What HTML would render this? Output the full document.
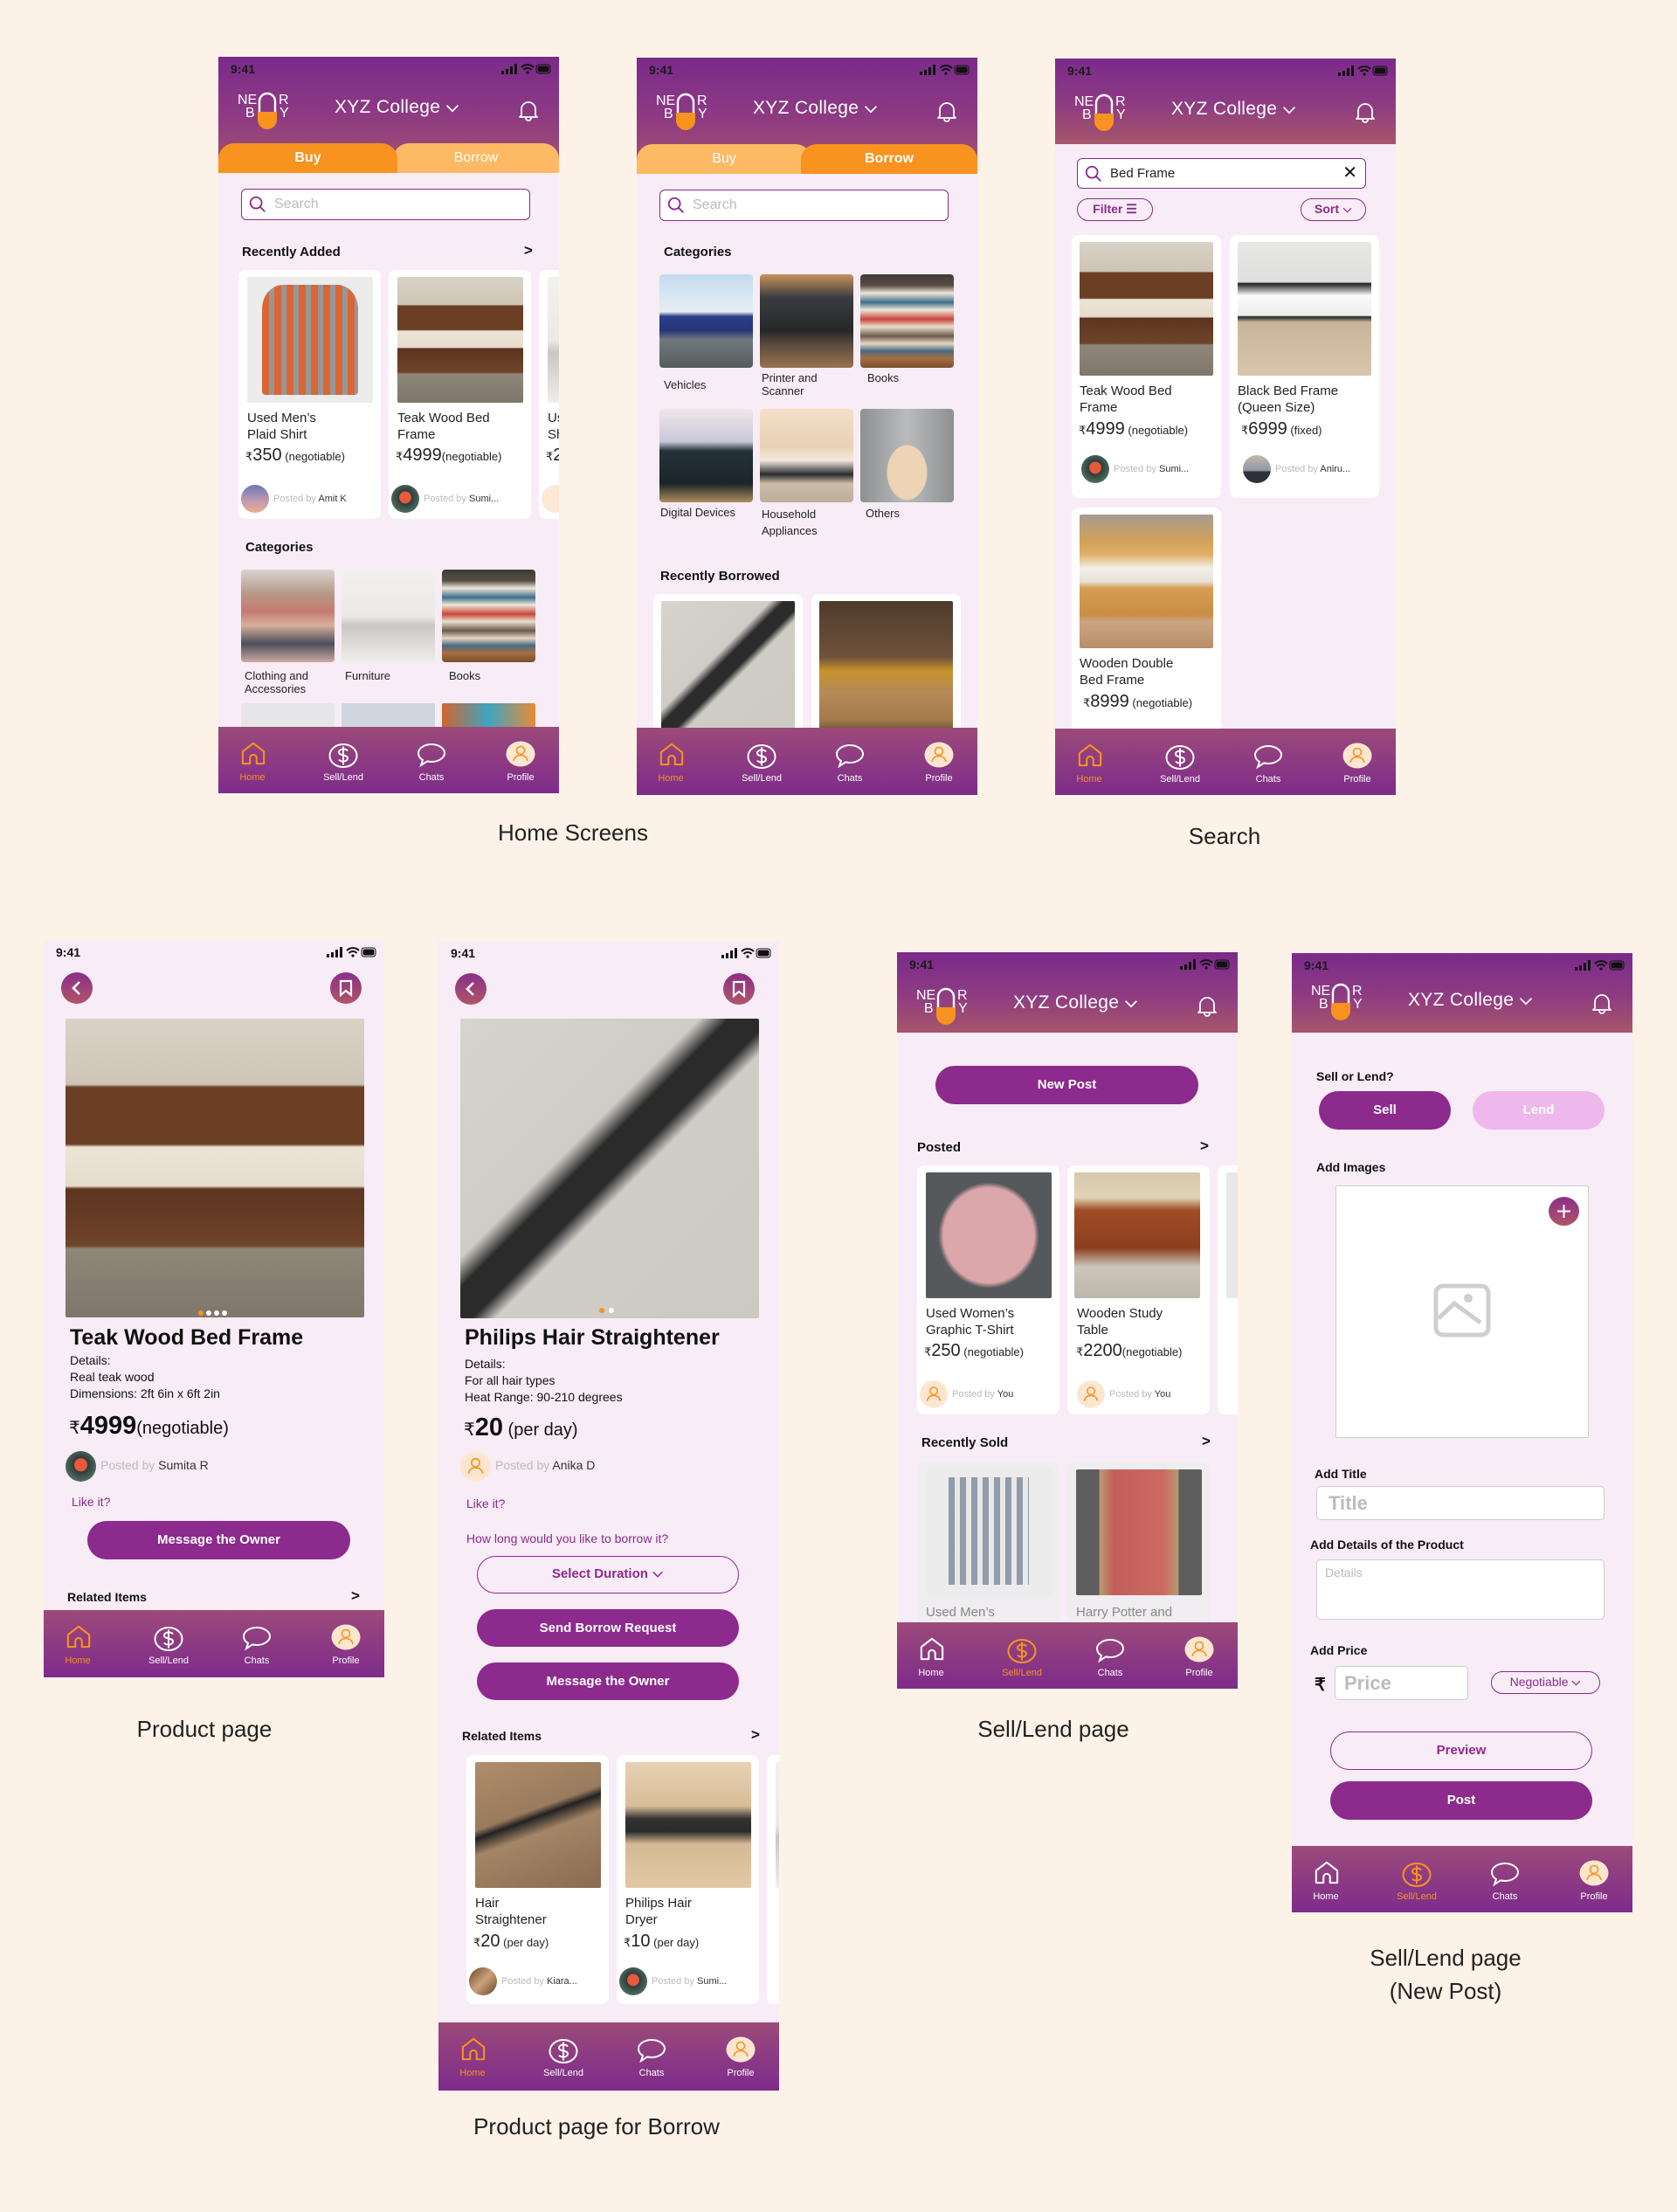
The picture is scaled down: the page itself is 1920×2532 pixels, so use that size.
<!DOCTYPE html>
<html><head><meta charset="utf-8">
<style>
*{margin:0;padding:0;box-sizing:border-box}
body{width:1920px;height:2532px;background:#fdf2e7;font-family:"Liberation Sans",sans-serif;position:relative;overflow:hidden;color:#111}
.ph{position:absolute;width:390px;background:#f8ecf6;overflow:hidden}
.ph>*,.card>*,.nav>*,.hd>*{position:absolute}
.hd{left:0;top:0;width:390px;background:linear-gradient(180deg,#7a2a8b 0%,#8f3c82 55%,#a6566a 100%)}
.st{left:14px;top:6px;font-size:14px;font-weight:bold;color:#111}
.hd .st{color:#1a1a1a}
.sbar{right:8px;top:7px}
.logo{left:22px;top:36px;width:62px;height:52px}
.college{left:133px;top:46px;color:#fff;font-size:21px;letter-spacing:.3px}
.bell{left:341px;top:47px}
.tab{top:99px;height:34px;border-radius:18px 18px 0 0;color:#fff;font-size:16px;text-align:center;line-height:34px}
.search{left:26px;top:151px;width:331px;height:36px;border:1.5px solid #8a2a8c;border-radius:6px;background:#fff;font-size:16px;color:#bbb;line-height:33px;padding-left:37px}
.search svg{position:absolute;left:7px;top:6px}
.sec{font-size:15px;font-weight:bold;color:#111}
.arr{font-size:17px;font-weight:bold}
.card{position:absolute;background:#fff;border-radius:8px}
.ct{left:10px;font-size:15px;line-height:19px;color:#222;white-space:nowrap}
.pr{left:8px;font-size:13px;color:#222;white-space:nowrap}
.pr b{font-size:20px;font-weight:normal}
.pb{left:3px;font-size:11px;color:#bbb;white-space:nowrap;line-height:32px;height:32px}
.pb span{color:#333}
.pb i{display:inline-block;width:32px;height:32px;border-radius:50%;vertical-align:top;margin-right:5px}
.a1{background:linear-gradient(180deg,#6d78b5,#c59ab0 60%,#e9b08d)}
.a2{background:radial-gradient(circle at 50% 45%,#e85a3a 0 28%,#2e3b3c 30%,#4d6a5c 70%)}
.a3{background:linear-gradient(180deg,#c9b7a9,#8d98a5 55%,#2d3038 60%)}
.a4{background:#fde9d6}
.a5{background:linear-gradient(135deg,#6b4528,#c9a27a,#6b4528)}
.img{border-radius:2px}
.cl{font-size:13px;line-height:15px;color:#222}
.nav{left:0;width:390px;background:linear-gradient(180deg,#9c4a7a,#7e2b8c)}
.ni{width:90px;text-align:center;font-size:11px;color:#fff}
.btn{background:#8c2a8d;color:#fff;border-radius:24px;text-align:center;font-weight:bold;font-size:15px}
.obtn{border:1.5px solid #8c2a8d;color:#8c2a8d;border-radius:24px;text-align:center;font-weight:bold;font-size:15px;background:transparent}
.cap{position:absolute;font-size:26px;color:#222;text-align:center;white-space:nowrap}
.circ{width:36px;height:36px;border-radius:50%;background:linear-gradient(180deg,#8a2f8a,#b05568)}
.pill{border:1.5px solid #8c2a8d;border-radius:14px;color:#8c2a8d;font-size:14px;text-align:center;font-weight:bold}
.shirt{background:#ececec}
.shirt:after{content:"";position:absolute;left:12%;top:6%;width:76%;height:88%;background:repeating-linear-gradient(90deg,#d9581f 0 8px,#8d8e92 8px 14px),#d9581f;opacity:.9;border-radius:22% 22% 4px 4px}
.bed{background:linear-gradient(180deg,#d9d2c7 0%,#cfc5b6 22%,#6a3f24 23%,#6a3f24 42%,#ece4d6 43%,#e6dccd 56%,#5c3420 57%,#6e4529 76%,#8f8679 77%,#7f776c 100%)}
.bed2{background:linear-gradient(180deg,#e8e8e6 0%,#dedede 30%,#222 31%,#fafafa 40%,#eee 55%,#222 56%,#c9b59b 60%,#d8c6ad 100%)}
.bed3{background:linear-gradient(180deg,#a79c8f 0%,#d2a158 20%,#e0b06a 30%,#f2eee8 40%,#e8e2d9 50%,#d79d52 55%,#c98d45 75%,#caa582 80%,#b98e68 100%)}
.clothes{background:linear-gradient(180deg,#d9d4d0 0,#b79b8a 25%,#c57a6f 45%,#d8b09c 60%,#4a4f5c 80%,#cfa9a0 100%)}
.furn{background:linear-gradient(180deg,#f3f1ee 0,#eceae6 50%,#c9c7c4 60%,#d8d6d2 75%,#f0eeea 100%)}
.books{background:linear-gradient(180deg,#3d3a36 0,#5a4e44 12%,#ede6d8 20%,#3d6f8a 30%,#ede6d8 38%,#c8463a 48%,#e9e0cd 56%,#6d5a4c 66%,#e3d8c2 74%,#4a6a82 82%,#a56f43 90%,#7a4e2c 100%)}
.scoot{background:linear-gradient(180deg,#c3dbef 0,#e7eef4 40%,#2b3e86 45%,#243479 60%,#727a7e 70%,#555a5c 100%)}
.printer{background:linear-gradient(180deg,#c9925a 0,#3a3c40 25%,#262729 60%,#5a4a3d 75%,#9a7350 100%)}
.digital{background:linear-gradient(180deg,#f0e7ea 0,#c8c7d9 35%,#24323a 45%,#1c2529 80%,#b08d5e 100%)}
.vacuum{background:linear-gradient(180deg,#f2e0c8 0,#e9d1b4 40%,#f3e8dc 55%,#2b2b2f 70%,#cdbda9 80%,#bcae9c 100%)}
.guitar{background:radial-gradient(ellipse 22% 30% at 50% 68%,#ecd4b4 0 95%,transparent 100%),linear-gradient(90deg,#8e9091,#b9bbbd 50%,#8e9091)}
.straight{background:linear-gradient(135deg,#d6d4cc 0,#cfcdc5 40%,#2b2b2b 45%,#2b2b2b 52%,#cfcdc5 56%,#cbc9c1 100%)}
.tools{background:linear-gradient(180deg,#4f3b2c 0,#6e523c 40%,#c8922c 50%,#b78a58 65%,#a47b4c 85%,#3f2e22 100%)}
.tshirt{background:radial-gradient(ellipse 40% 42% at 50% 50%,#dca7ab 0 90%,transparent 100%),#56595b}
.desk{background:linear-gradient(180deg,#d8c9ae 0,#e1d3b5 20%,#a04d26 30%,#8c3e1e 60%,#cdc6bc 75%,#bdb6ab 100%)}
.plaid{background:#ececec}
.plaid:after{content:"";position:absolute;left:18%;top:6%;width:64%;height:86%;background:repeating-linear-gradient(90deg,#5c6d86 0 7px,#e6e6e6 7px 13px);opacity:.85}
.hp{background:linear-gradient(90deg,#3a3a3a 0,#3a3a3a 18%,#a88551 19%,#b83a36 30%,#c24a3e 70%,#a88551 81%,#3a3a3a 82%)}
.hs2{background:linear-gradient(160deg,#b08c6a 0,#9a7b5e 40%,#222 45%,#a48566 55%,#8a6a50 100%)}
.dryer{background:linear-gradient(180deg,#e7d2b4 0,#d8bd98 35%,#333 45%,#2a2a2a 55%,#d4b994 65%,#e2c9a6 100%)}
</style></head><body>

<svg width="0" height="0" style="position:absolute">
<defs>
<symbol id="sb" viewBox="0 0 58 14"><rect x="0" y="9" width="3" height="4" fill="#111"/><rect x="5" y="7" width="3" height="6" fill="#111"/><rect x="10" y="4" width="3" height="9" fill="#111"/><rect x="15" y="1" width="3" height="12" fill="#111"/><path d="M23 5a10 10 0 0 1 14 0M25.5 8a6 6 0 0 1 9 0" stroke="#111" stroke-width="2" fill="none"/><circle cx="30" cy="11" r="1.6" fill="#111"/><rect x="40" y="2" width="16" height="10" rx="3" fill="none" stroke="#111" stroke-width="1"/><rect x="41.5" y="3.5" width="13" height="7" rx="2" fill="#111"/></symbol>
<symbol id="bell" viewBox="0 0 28 28"><path d="M6 20V13a8 8 0 0 1 16 0v7l2 2H4z M11 23a3 3 0 0 0 6 0" stroke="#fff" stroke-width="1.8" fill="none" stroke-linejoin="round"/></symbol>
<symbol id="logo" viewBox="0 0 62 52"><path d="M25 30V15a9 9 0 0 1 18 0v15" stroke="#fff" stroke-width="2.4" fill="none"/><path d="M23 27h22v9a11 11 0 0 1-22 0z" fill="#f7931e"/></symbol>
<symbol id="home" viewBox="0 0 32 30"><path d="M3 28V13L16 3l13 10v15H20v-7a4 4 0 0 0-8 0v7z" fill="none" stroke="currentColor" stroke-width="2.2" stroke-linejoin="round"/></symbol>
<symbol id="dollar" viewBox="0 0 34 30"><ellipse cx="17" cy="15" rx="15.5" ry="13" fill="none" stroke="currentColor" stroke-width="2"/><path d="M22 9.5c-1-1.5-3-2-5-2s-5 1-5 3.5 3 3 5 3.5 5 1 5 3.5-3 3.5-5 3.5-4-.5-5-2M17 4.5v21" fill="none" stroke="currentColor" stroke-width="2"/></symbol>
<symbol id="chat" viewBox="0 0 34 30"><path d="M17 3c8 0 15 4.5 15 10s-7 10-15 10c-2 0-3.5-.2-5-.6L5 27l2-6C3.5 19 2 16 2 13 2 7.5 9 3 17 3z" fill="none" stroke="currentColor" stroke-width="2"/></symbol>
<symbol id="user" viewBox="0 0 34 30"><ellipse cx="17" cy="15" rx="16.5" ry="14.5" fill="#fde6d0"/><circle cx="17" cy="11" r="4.5" fill="none" stroke="#f7931e" stroke-width="1.6"/><path d="M9 23c1-4.5 4-6.5 8-6.5s7 2 8 6.5" fill="none" stroke="#f7931e" stroke-width="1.6"/></symbol>
<symbol id="srch" viewBox="0 0 24 24"><circle cx="10" cy="10" r="7" fill="none" stroke="#8c2a8d" stroke-width="2"/><path d="M15 15l6 6" stroke="#8c2a8d" stroke-width="2"/></symbol>
<symbol id="chev" viewBox="0 0 20 12"><path d="M2 2l8 8 8-8" fill="none" stroke="currentColor" stroke-width="2.2"/></symbol>
</defs></svg>

<!-- ============ PHONE 1 ============ -->
<div class="ph" style="left:250px;top:65px;height:843px">
 <div class="hd" style="height:133px">
  <div class="st">9:41</div><svg class="sbar" width="58" height="14"><use href="#sb"/></svg>
  <svg class="logo" width="62" height="52"><use href="#logo"/><text x="0" y="18" font-size="16" fill="#fff" font-family="Liberation Sans">NE</text><text x="47" y="18" font-size="16" fill="#fff" font-family="Liberation Sans">R</text><text x="9" y="33" font-size="16" fill="#fff" font-family="Liberation Sans">B</text><text x="48" y="33" font-size="16" fill="#fff" font-family="Liberation Sans">Y</text></svg>
  <div class="college">XYZ College <svg width="16" height="10" style="color:#fff"><use href="#chev"/></svg></div>
  <svg class="bell" width="28" height="28"><use href="#bell"/></svg>
  <div class="tab" style="left:200px;width:190px;background:#fdb964">Borrow</div>
  <div class="tab" style="left:0;width:205px;background:#f7931e;font-weight:bold">Buy</div>
 </div>
 <div class="search"><svg width="22" height="22"><use href="#srch"/></svg>Search</div>
 <div class="sec" style="left:27px;top:215px">Recently Added</div><div class="arr" style="left:350px;top:212px">&gt;</div>
 <div class="card" style="left:23px;top:244px;width:163px;height:285px">
  <div class="img shirt" style="left:10px;top:8px;width:144px;height:144px"></div>
  <div class="ct" style="top:160px">Used Men’s<br>Plaid Shirt</div>
  <div class="pr" style="top:201px">₹<b>350</b> (negotiable)</div>
  <div class="pb" style="top:246px"><i class="a1"></i>Posted by <span>Amit K</span></div>
 </div>
 <div class="card" style="left:195px;top:244px;width:163px;height:285px">
  <div class="img bed" style="left:10px;top:8px;width:144px;height:144px"></div>
  <div class="ct" style="top:160px">Teak Wood Bed<br>Frame</div>
  <div class="pr" style="top:201px">₹<b>4999</b>(negotiable)</div>
  <div class="pb" style="top:246px"><i class="a2"></i>Posted by <span>Sumi...</span></div>
 </div>
 <div class="card" style="left:367px;top:244px;width:163px;height:285px">
  <div class="img furn" style="left:10px;top:8px;width:144px;height:144px"></div>
  <div class="ct" style="top:160px">Used<br>Sh</div>
  <div class="pr" style="top:201px">₹<b>2</b></div>
  <div class="pb" style="top:246px"><i class="a4"></i></div>
 </div>
 <div class="sec" style="left:31px;top:553px">Categories</div>
 <div class="img clothes" style="left:26px;top:587px;width:107px;height:106px;border-radius:4px"></div>
 <div class="img furn" style="left:141px;top:587px;width:107px;height:106px;border-radius:4px"></div>
 <div class="img books" style="left:256px;top:587px;width:107px;height:106px;border-radius:4px"></div>
 <div class="cl" style="left:30px;top:701px">Clothing and<br>Accessories</div>
 <div class="cl" style="left:145px;top:701px">Furniture</div>
 <div class="cl" style="left:264px;top:701px">Books</div>
 <div class="img" style="left:26px;top:740px;width:107px;height:40px;background:#e6e6e8"></div>
 <div class="img" style="left:141px;top:740px;width:107px;height:40px;background:#cfd6df"></div>
 <div class="img" style="left:256px;top:740px;width:107px;height:40px;background:linear-gradient(90deg,#d0652f,#3ea4c2,#e98b35)"></div>
 <div class="nav" style="top:767px;height:76px">
  <svg style="left:25px;top:16px;width:30px;height:28px;color:#f7931e"><use href="#home"/></svg><div class="ni" style="left:-6px;top:52px;color:#f7931e">Home</div>
  <svg style="left:126px;top:18px;width:34px;height:30px;color:#fff"><use href="#dollar"/></svg><div class="ni" style="left:98px;top:52px">Sell/Lend</div>
  <svg style="left:227px;top:17px;width:34px;height:30px;color:#fff"><use href="#chat"/></svg><div class="ni" style="left:199px;top:52px">Chats</div>
  <svg style="left:329px;top:16px;width:34px;height:30px"><use href="#user"/></svg><div class="ni" style="left:301px;top:52px">Profile</div>
 </div>
</div>

<!-- ============ PHONE 2 ============ -->
<div class="ph" style="left:729px;top:66px;height:844px">
 <div class="hd" style="height:133px">
  <div class="st">9:41</div><svg class="sbar" width="58" height="14"><use href="#sb"/></svg>
  <svg class="logo" width="62" height="52"><use href="#logo"/><text x="0" y="18" font-size="16" fill="#fff" font-family="Liberation Sans">NE</text><text x="47" y="18" font-size="16" fill="#fff" font-family="Liberation Sans">R</text><text x="9" y="33" font-size="16" fill="#fff" font-family="Liberation Sans">B</text><text x="48" y="33" font-size="16" fill="#fff" font-family="Liberation Sans">Y</text></svg>
  <div class="college">XYZ College <svg width="16" height="10" style="color:#fff"><use href="#chev"/></svg></div>
  <svg class="bell" width="28" height="28"><use href="#bell"/></svg>
  <div class="tab" style="left:0;width:200px;background:#fdb964">Buy</div>
  <div class="tab" style="left:188px;width:202px;background:#f7931e;font-weight:bold">Borrow</div>
 </div>
 <div class="search"><svg width="22" height="22"><use href="#srch"/></svg>Search</div>
 <div class="sec" style="left:31px;top:214px">Categories</div>
 <div class="img scoot" style="left:26px;top:248px;width:107px;height:107px;border-radius:4px"></div>
 <div class="img printer" style="left:141px;top:248px;width:107px;height:107px;border-radius:4px"></div>
 <div class="img books" style="left:256px;top:248px;width:107px;height:107px;border-radius:4px"></div>
 <div class="cl" style="left:31px;top:367px">Vehicles</div>
 <div class="cl" style="left:143px;top:359px">Printer and<br>Scanner</div>
 <div class="cl" style="left:264px;top:359px">Books</div>
 <div class="img digital" style="left:26px;top:402px;width:107px;height:107px;border-radius:4px"></div>
 <div class="img vacuum" style="left:141px;top:402px;width:107px;height:107px;border-radius:4px"></div>
 <div class="img guitar" style="left:256px;top:402px;width:107px;height:107px;border-radius:4px"></div>
 <div class="cl" style="left:27px;top:513px">Digital Devices</div>
 <div class="cl" style="left:143px;top:513px;line-height:19px">Household<br>Appliances</div>
 <div class="cl" style="left:262px;top:514px">Others</div>
 <div class="sec" style="left:27px;top:585px">Recently Borrowed</div>
 <div class="card" style="left:19px;top:614px;width:171px;height:200px">
  <div class="img straight" style="left:9px;top:8px;width:153px;height:160px"></div>
 </div>
 <div class="card" style="left:200px;top:614px;width:171px;height:200px">
  <div class="img tools" style="left:9px;top:8px;width:153px;height:160px"></div>
 </div>
 <div class="nav" style="top:767px;height:77px">
  <svg style="left:25px;top:16px;width:30px;height:28px;color:#f7931e"><use href="#home"/></svg><div class="ni" style="left:-6px;top:52px;color:#f7931e">Home</div>
  <svg style="left:126px;top:18px;width:34px;height:30px;color:#fff"><use href="#dollar"/></svg><div class="ni" style="left:98px;top:52px">Sell/Lend</div>
  <svg style="left:227px;top:17px;width:34px;height:30px;color:#fff"><use href="#chat"/></svg><div class="ni" style="left:199px;top:52px">Chats</div>
  <svg style="left:329px;top:16px;width:34px;height:30px"><use href="#user"/></svg><div class="ni" style="left:301px;top:52px">Profile</div>
 </div>
</div>

<!-- ============ PHONE 3 (Search) ============ -->
<div class="ph" style="left:1208px;top:67px;height:843px">
 <div class="hd" style="height:98px">
  <div class="st">9:41</div><svg class="sbar" width="58" height="14"><use href="#sb"/></svg>
  <svg class="logo" width="62" height="52"><use href="#logo"/><text x="0" y="18" font-size="16" fill="#fff" font-family="Liberation Sans">NE</text><text x="47" y="18" font-size="16" fill="#fff" font-family="Liberation Sans">R</text><text x="9" y="33" font-size="16" fill="#fff" font-family="Liberation Sans">B</text><text x="48" y="33" font-size="16" fill="#fff" font-family="Liberation Sans">Y</text></svg>
  <div class="college">XYZ College <svg width="16" height="10" style="color:#fff"><use href="#chev"/></svg></div>
  <svg class="bell" width="28" height="28"><use href="#bell"/></svg>
 </div>
 <div class="search" style="left:25px;top:114px;width:331px;height:35px;color:#222;font-size:15px">
  <svg width="22" height="22"><use href="#srch"/></svg>Bed Frame<span style="position:absolute;right:9px;top:0;font-size:20px;color:#111">✕</span></div>
 <div class="pill" style="left:25px;top:160px;width:87px;height:26px;line-height:23px">Filter ☰</div>
 <div class="pill" style="left:281px;top:160px;width:75px;height:26px;line-height:23px">Sort <svg width="11" height="7" style="color:#8c2a8d"><use href="#chev"/></svg></div>
 <div class="card" style="left:19px;top:202px;width:171px;height:301px">
  <div class="img bed" style="left:9px;top:8px;width:153px;height:153px"></div>
  <div class="ct" style="left:9px;top:169px">Teak Wood Bed<br>Frame</div>
  <div class="pr" style="left:8px;top:211px">₹<b>4999</b> (negotiable)</div>
  <div class="pb" style="left:11px;top:252px"><i class="a2"></i>Posted by <span>Sumi...</span></div>
 </div>
 <div class="card" style="left:200px;top:202px;width:171px;height:301px">
  <div class="img bed2" style="left:9px;top:8px;width:153px;height:153px"></div>
  <div class="ct" style="left:9px;top:169px">Black Bed Frame<br>(Queen Size)</div>
  <div class="pr" style="left:13px;top:211px">₹<b>6999</b> (fixed)</div>
  <div class="pb" style="left:15px;top:252px"><i class="a3"></i>Posted by <span>Aniru...</span></div>
 </div>
 <div class="card" style="left:19px;top:514px;width:171px;height:301px">
  <div class="img bed3" style="left:9px;top:8px;width:153px;height:153px"></div>
  <div class="ct" style="left:9px;top:169px">Wooden Double<br>Bed Frame</div>
  <div class="pr" style="left:13px;top:211px">₹<b>8999</b> (negotiable)</div>
 </div>
 <div class="nav" style="top:767px;height:76px">
  <svg style="left:25px;top:16px;width:30px;height:28px;color:#f7931e"><use href="#home"/></svg><div class="ni" style="left:-6px;top:52px;color:#f7931e">Home</div>
  <svg style="left:126px;top:18px;width:34px;height:30px;color:#fff"><use href="#dollar"/></svg><div class="ni" style="left:98px;top:52px">Sell/Lend</div>
  <svg style="left:227px;top:17px;width:34px;height:30px;color:#fff"><use href="#chat"/></svg><div class="ni" style="left:199px;top:52px">Chats</div>
  <svg style="left:329px;top:16px;width:34px;height:30px"><use href="#user"/></svg><div class="ni" style="left:301px;top:52px">Profile</div>
 </div>
</div>

<!-- ============ PHONE 4 (Product) ============ -->
<div class="ph" style="left:50px;top:1076px;height:844px">
 <div class="st">9:41</div><svg class="sbar" width="58" height="14"><use href="#sb"/></svg>
 <div class="circ" style="left:20px;top:37px"><svg width="36" height="36"><path d="M21 11l-7 7 7 7" stroke="#fff" stroke-width="2.6" fill="none"/></svg></div>
 <div class="circ" style="left:328px;top:37px"><svg width="36" height="36"><path d="M12 10h12v16l-6-5-6 5z" stroke="#fff" stroke-width="2.2" fill="none"/></svg></div>
 <div class="img bed" style="left:25px;top:90px;width:342px;height:342px"></div>
 <svg style="left:177px;top:424px" width="40" height="6"><circle cx="3" cy="3" r="3" fill="#f7931e"/><circle cx="12" cy="3" r="3" fill="#fff"/><circle cx="21" cy="3" r="3" fill="#fff"/><circle cx="30" cy="3" r="3" fill="#fff"/></svg>
 <div style="left:30px;top:441px;font-size:25px;font-weight:bold">Teak Wood Bed Frame</div>
 <div style="left:30px;top:472px;font-size:14px;line-height:19px">Details:<br>Real teak wood<br>Dimensions: 2ft 6in x 6ft 2in</div>
 <div style="left:29px;top:540px;font-size:20px;white-space:nowrap">₹<b style="font-size:29px">4999</b>(negotiable)</div>
 <div class="pb" style="left:25px;top:585px;font-size:14px"><i class="a2" style="width:35px;height:35px"></i>Posted by <span>Sumita R</span></div>
 <div style="left:32px;top:635px;font-size:14px;color:#8c2a8d">Like it?</div>
 <div class="btn" style="left:50px;top:665px;width:301px;height:44px;line-height:44px">Message the Owner</div>
 <div class="sec" style="left:27px;top:744px;font-size:14px">Related Items</div><div class="arr" style="left:352px;top:741px">&gt;</div>
 <div class="nav" style="top:767px;height:77px">
  <svg style="left:25px;top:16px;width:30px;height:28px;color:#f7931e"><use href="#home"/></svg><div class="ni" style="left:-6px;top:52px;color:#f7931e">Home</div>
  <svg style="left:126px;top:18px;width:34px;height:30px;color:#fff"><use href="#dollar"/></svg><div class="ni" style="left:98px;top:52px">Sell/Lend</div>
  <svg style="left:227px;top:17px;width:34px;height:30px;color:#fff"><use href="#chat"/></svg><div class="ni" style="left:199px;top:52px">Chats</div>
  <svg style="left:329px;top:16px;width:34px;height:30px"><use href="#user"/></svg><div class="ni" style="left:301px;top:52px">Profile</div>
 </div>
</div>

<!-- ============ PHONE 5 (Borrow product) ============ -->
<div class="ph" style="left:502px;top:1077px;height:1316px">
 <div class="st">9:41</div><svg class="sbar" width="58" height="14"><use href="#sb"/></svg>
 <div class="circ" style="left:19px;top:37px"><svg width="36" height="36"><path d="M21 11l-7 7 7 7" stroke="#fff" stroke-width="2.6" fill="none"/></svg></div>
 <div class="circ" style="left:326px;top:37px"><svg width="36" height="36"><path d="M12 10h12v16l-6-5-6 5z" stroke="#fff" stroke-width="2.2" fill="none"/></svg></div>
 <div class="img straight" style="left:25px;top:89px;width:342px;height:343px"></div>
 <svg style="left:184px;top:420px" width="24" height="6"><circle cx="3" cy="3" r="3" fill="#f7931e"/><circle cx="14" cy="3" r="3" fill="#fff"/></svg>
 <div style="left:30px;top:440px;font-size:25px;font-weight:bold">Philips Hair Straightener</div>
 <div style="left:30px;top:475px;font-size:14px;line-height:19px">Details:<br>For all hair types<br>Heat Range: 90-210 degrees</div>
 <div style="left:29px;top:541px;font-size:20px;white-space:nowrap">₹<b style="font-size:29px">20</b> (per day)</div>
 <div class="pb" style="left:25px;top:584px;font-size:14px"><i class="a4" style="width:35px;height:35px;position:relative"><svg width="35" height="35" style="position:absolute;left:0;top:0"><use href="#user"/></svg></i>Posted by <span>Anika D</span></div>
 <div style="left:32px;top:636px;font-size:14px;color:#8c2a8d">Like it?</div>
 <div style="left:32px;top:676px;font-size:14px;color:#8c2a8d">How long would you like to borrow it?</div>
 <div class="obtn" style="left:44px;top:704px;width:300px;height:43px;line-height:40px">Select Duration <svg width="14" height="8" style="color:#8c2a8d"><use href="#chev"/></svg></div>
 <div class="btn" style="left:44px;top:765px;width:300px;height:43px;line-height:43px">Send Borrow Request</div>
 <div class="btn" style="left:44px;top:826px;width:300px;height:43px;line-height:43px">Message the Owner</div>
 <div class="sec" style="left:27px;top:902px;font-size:14px">Related Items</div><div class="arr" style="left:358px;top:899px">&gt;</div>
 <div class="card" style="left:32px;top:932px;width:163px;height:285px">
  <div class="img hs2" style="left:10px;top:8px;width:144px;height:144px"></div>
  <div class="ct" style="top:160px">Hair<br>Straightener</div>
  <div class="pr" style="top:202px">₹<b>20</b> (per day)</div>
  <div class="pb" style="top:243px"><i class="a5"></i>Posted by <span>Kiara...</span></div>
 </div>
 <div class="card" style="left:204px;top:932px;width:163px;height:285px">
  <div class="img dryer" style="left:10px;top:8px;width:144px;height:144px"></div>
  <div class="ct" style="top:160px">Philips Hair<br>Dryer</div>
  <div class="pr" style="top:202px">₹<b>10</b> (per day)</div>
  <div class="pb" style="top:243px"><i class="a2"></i>Posted by <span>Sumi...</span></div>
 </div>
 <div class="card" style="left:376px;top:932px;width:163px;height:285px">
  <div class="img furn" style="left:10px;top:8px;width:144px;height:144px"></div>
 </div>
 <div class="nav" style="top:1238px;height:78px">
  <svg style="left:25px;top:16px;width:30px;height:28px;color:#f7931e"><use href="#home"/></svg><div class="ni" style="left:-6px;top:52px;color:#f7931e">Home</div>
  <svg style="left:126px;top:18px;width:34px;height:30px;color:#fff"><use href="#dollar"/></svg><div class="ni" style="left:98px;top:52px">Sell/Lend</div>
  <svg style="left:227px;top:17px;width:34px;height:30px;color:#fff"><use href="#chat"/></svg><div class="ni" style="left:199px;top:52px">Chats</div>
  <svg style="left:329px;top:16px;width:34px;height:30px"><use href="#user"/></svg><div class="ni" style="left:301px;top:52px">Profile</div>
 </div>
</div>

<!-- ============ PHONE 6 (Sell/Lend) ============ -->
<div class="ph" style="left:1027px;top:1090px;height:843px">
 <div class="hd" style="height:92px">
  <div class="st">9:41</div><svg class="sbar" width="58" height="14"><use href="#sb"/></svg>
  <svg class="logo" width="62" height="52"><use href="#logo"/><text x="0" y="18" font-size="16" fill="#fff" font-family="Liberation Sans">NE</text><text x="47" y="18" font-size="16" fill="#fff" font-family="Liberation Sans">R</text><text x="9" y="33" font-size="16" fill="#fff" font-family="Liberation Sans">B</text><text x="48" y="33" font-size="16" fill="#fff" font-family="Liberation Sans">Y</text></svg>
  <div class="college">XYZ College <svg width="16" height="10" style="color:#fff"><use href="#chev"/></svg></div>
  <svg class="bell" width="28" height="28"><use href="#bell"/></svg>
 </div>
 <div class="btn" style="left:44px;top:130px;width:301px;height:44px;line-height:44px">New Post</div>
 <div class="sec" style="left:23px;top:215px">Posted</div><div class="arr" style="left:347px;top:212px">&gt;</div>
 <div class="card" style="left:23px;top:244px;width:163px;height:285px">
  <div class="img tshirt" style="left:10px;top:8px;width:144px;height:144px"></div>
  <div class="ct" style="top:160px">Used Women’s<br>Graphic T-Shirt</div>
  <div class="pr" style="top:201px">₹<b>250</b> (negotiable)</div>
  <div class="pb" style="top:246px"><i class="a4" style="position:relative"><svg width="32" height="32" style="position:absolute;left:0;top:0"><use href="#user"/></svg></i>Posted by <span>You</span></div>
 </div>
 <div class="card" style="left:195px;top:244px;width:163px;height:285px">
  <div class="img desk" style="left:8px;top:8px;width:144px;height:144px"></div>
  <div class="ct" style="left:11px;top:160px">Wooden Study<br>Table</div>
  <div class="pr" style="left:10px;top:201px">₹<b>2200</b>(negotiable)</div>
  <div class="pb" style="left:11px;top:246px"><i class="a4" style="position:relative"><svg width="32" height="32" style="position:absolute;left:0;top:0"><use href="#user"/></svg></i>Posted by <span>You</span></div>
 </div>
 <div class="card" style="left:367px;top:244px;width:163px;height:285px">
  <div class="img" style="left:10px;top:8px;width:144px;height:144px;background:#e8e8e8"></div>
 </div>
 <div class="sec" style="left:28px;top:553px">Recently Sold</div><div class="arr" style="left:349px;top:550px">&gt;</div>
 <div class="card" style="left:23px;top:584px;width:163px;height:200px;background:#efedef">
  <div class="img plaid" style="left:10px;top:8px;width:144px;height:144px;opacity:.75"></div>
  <div class="ct" style="top:162px;color:#888">Used Men’s</div>
 </div>
 <div class="card" style="left:195px;top:584px;width:163px;height:200px;background:#efedef">
  <div class="img hp" style="left:10px;top:8px;width:144px;height:144px;opacity:.8"></div>
  <div class="ct" style="top:162px;color:#888">Harry Potter and</div>
 </div>
 <div class="nav" style="top:767px;height:76px">
  <svg style="left:25px;top:16px;width:30px;height:28px;color:#fff"><use href="#home"/></svg><div class="ni" style="left:-6px;top:52px">Home</div>
  <svg style="left:126px;top:18px;width:34px;height:30px;color:#f7931e"><use href="#dollar"/></svg><div class="ni" style="left:98px;top:52px;color:#f7931e">Sell/Lend</div>
  <svg style="left:227px;top:17px;width:34px;height:30px;color:#fff"><use href="#chat"/></svg><div class="ni" style="left:199px;top:52px">Chats</div>
  <svg style="left:329px;top:16px;width:34px;height:30px"><use href="#user"/></svg><div class="ni" style="left:301px;top:52px">Profile</div>
 </div>
</div>

<!-- ============ PHONE 7 (New Post) ============ -->
<div class="ph" style="left:1479px;top:1091px;height:1098px">
 <div class="hd" style="height:91px">
  <div class="st">9:41</div><svg class="sbar" width="58" height="14"><use href="#sb"/></svg>
  <svg class="logo" width="62" height="52" style="top:30px"><use href="#logo"/><text x="0" y="18" font-size="16" fill="#fff" font-family="Liberation Sans">NE</text><text x="47" y="18" font-size="16" fill="#fff" font-family="Liberation Sans">R</text><text x="9" y="33" font-size="16" fill="#fff" font-family="Liberation Sans">B</text><text x="48" y="33" font-size="16" fill="#fff" font-family="Liberation Sans">Y</text></svg>
  <div class="college" style="top:42px">XYZ College <svg width="16" height="10" style="color:#fff"><use href="#chev"/></svg></div>
  <svg class="bell" width="28" height="28" style="top:43px"><use href="#bell"/></svg>
 </div>
 <div class="sec" style="left:28px;top:133px;font-size:14px">Sell or Lend?</div>
 <div class="btn" style="left:31px;top:158px;width:151px;height:44px;line-height:44px">Sell</div>
 <div class="btn" style="left:207px;top:158px;width:151px;height:44px;line-height:44px;background:#efb8ec">Lend</div>
 <div class="sec" style="left:28px;top:237px;font-size:14px">Add Images</div>
 <div style="left:50px;top:266px;width:290px;height:289px;background:#fff;border:1.5px solid #d0d0d0"></div>
 <div class="circ" style="left:294px;top:279px;width:35px;height:33px"><svg width="35" height="33"><path d="M17.5 9v15M10 16.5h15" stroke="#fff" stroke-width="2"/></svg></div>
 <svg style="left:162px;top:378px" width="66" height="62"><rect x="3" y="3" width="60" height="56" rx="8" fill="none" stroke="#cfcfcf" stroke-width="5"/><circle cx="40" cy="17" r="5" fill="#cfcfcf"/><path d="M6 40l18-17 30 22" stroke="#cfcfcf" stroke-width="5" fill="none"/></svg>
 <div class="sec" style="left:26px;top:588px;font-size:14px">Add Title</div>
 <div style="left:28px;top:610px;width:330px;height:39px;background:#fff;border:1px solid #ccc;border-radius:5px;font-size:22px;font-weight:bold;color:#bbb;padding-left:13px;line-height:37px">Title</div>
 <div class="sec" style="left:21px;top:669px;font-size:14px">Add Details of the Product</div>
 <div style="left:28px;top:694px;width:330px;height:69px;background:#fff;border:1px solid #ccc;border-radius:5px;font-size:14px;color:#bbb;padding:6px 0 0 9px">Details</div>
 <div class="sec" style="left:21px;top:790px;font-size:14px">Add Price</div>
 <div style="left:26px;top:825px;font-size:20px;font-weight:bold">₹</div>
 <div style="left:49px;top:816px;width:153px;height:39px;background:#fff;border:1px solid #ccc;border-radius:5px;font-size:22px;font-weight:bold;color:#bbb;padding-left:10px;line-height:37px">Price</div>
 <div class="pill" style="left:228px;top:822px;width:125px;height:26px;line-height:23px;font-weight:normal">Negotiable <svg width="11" height="7" style="color:#8c2a8d"><use href="#chev"/></svg></div>
 <div class="obtn" style="left:44px;top:891px;width:300px;height:44px;line-height:41px">Preview</div>
 <div class="btn" style="left:44px;top:948px;width:300px;height:44px;line-height:44px">Post</div>
 <div class="nav" style="top:1022px;height:76px">
  <svg style="left:25px;top:16px;width:30px;height:28px;color:#fff"><use href="#home"/></svg><div class="ni" style="left:-6px;top:52px">Home</div>
  <svg style="left:126px;top:18px;width:34px;height:30px;color:#f7931e"><use href="#dollar"/></svg><div class="ni" style="left:98px;top:52px;color:#f7931e">Sell/Lend</div>
  <svg style="left:227px;top:17px;width:34px;height:30px;color:#fff"><use href="#chat"/></svg><div class="ni" style="left:199px;top:52px">Chats</div>
  <svg style="left:329px;top:16px;width:34px;height:30px"><use href="#user"/></svg><div class="ni" style="left:301px;top:52px">Profile</div>
 </div>
</div>

<!-- captions -->
<div class="cap" style="left:456px;top:938px;width:400px">Home Screens</div>
<div class="cap" style="left:1202px;top:942px;width:400px">Search</div>
<div class="cap" style="left:34px;top:1964px;width:400px">Product page</div>
<div class="cap" style="left:483px;top:2419px;width:400px">Product page for Borrow</div>
<div class="cap" style="left:1006px;top:1964px;width:400px">Sell/Lend page</div>
<div class="cap" style="left:1455px;top:2222px;width:400px;line-height:38px">Sell/Lend page<br>(New Post)</div>
</body></html>
